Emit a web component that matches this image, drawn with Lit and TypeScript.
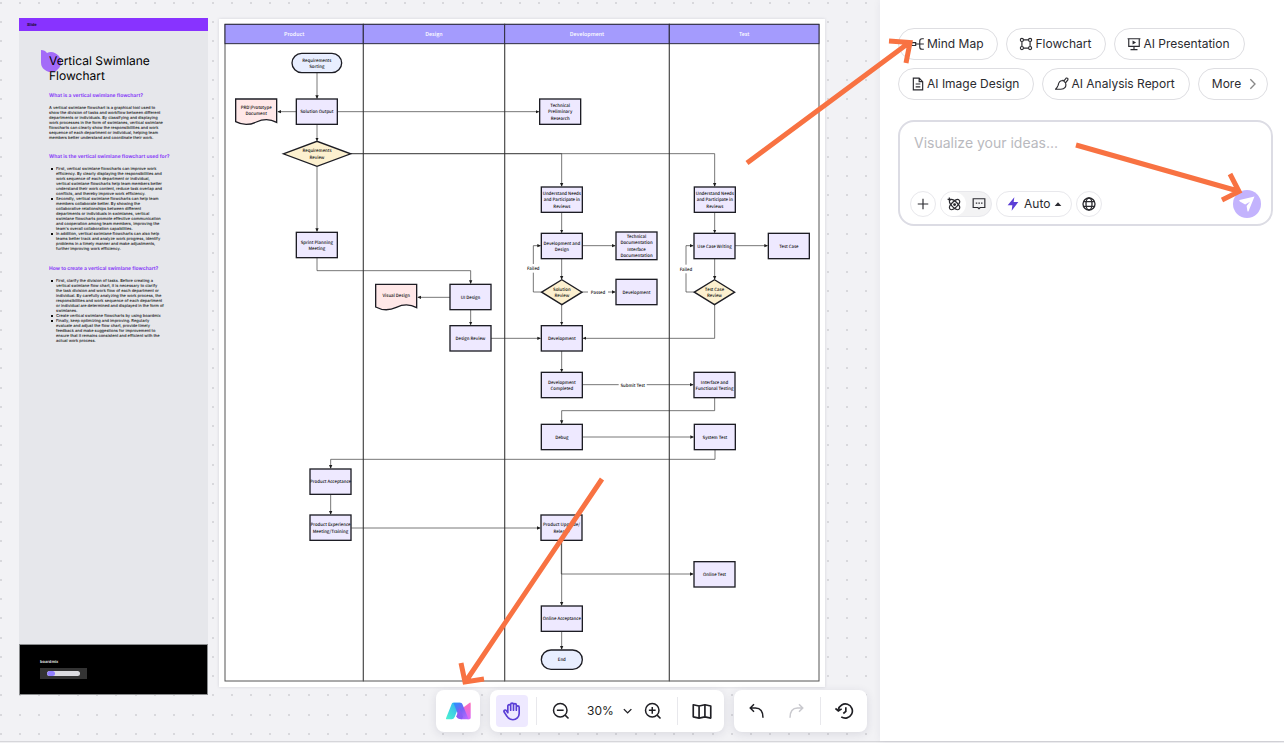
import { LitElement, html, svg, css } from "lit";
import { customElement } from "lit/decorators.js";

type Shape = "box" | "pill" | "diamond" | "doc";
interface Node {
  shape: Shape;
  x: number;
  y: number;
  w: number;
  h: number;
  lines: string[];
}

const box = (x: number, y: number, lines: string[], h = 76, w = 123): Node => ({ shape: "box", x, y, w, h, lines });

const NODES: Node[] = [
  { shape: "pill", x: 876, y: 160, w: 149, h: 58, lines: ["Requirements", "Sorting"] },
  { shape: "doc", x: 707, y: 297, w: 123, h: 76, lines: ["PRD\\Prototype", "Document"] },
  box(889, 297, ["Solution Output"]),
  { shape: "diamond", x: 850, y: 424, w: 202, h: 75, lines: ["Requirements", "Review"] },
  box(1619, 297, ["Technical", "Preliminary", "Research"]),
  box(1624, 561, ["Understand Needs", "and Participate in", "Reviews"]),
  box(2083, 561, ["Understand Needs", "and Participate in", "Reviews"]),
  box(889, 697, ["Sprint Planning", "Meeting"]),
  box(1624, 700, ["Development and", "Design"]),
  box(1848, 696, ["Technical", "Documentation", "Interface", "Documentation"], 83),
  box(2082, 700, ["Use Case Writing"]),
  box(2305, 700, ["Test Case"]),
  { shape: "diamond", x: 1625, y: 839, w: 121, h: 75, lines: ["Solution", "Review"] },
  box(1848, 838, ["Development"]),
  { shape: "diamond", x: 2083, y: 839, w: 121, h: 75, lines: ["Test Case", "Review"] },
  { shape: "doc", x: 1127, y: 853, w: 123, h: 76, lines: ["Visual Design"] },
  box(1350, 853, ["UI Design"]),
  box(1350, 977, ["Design Review"]),
  box(1624, 977, ["Development"]),
  box(1624, 1117, ["Development", "Completed"]),
  box(2082, 1117, ["Interface and", "Functional Testing"]),
  box(1624, 1273, ["Debug"]),
  box(2083, 1273, ["System Test"]),
  box(930, 1407, ["Product Acceptance"]),
  box(930, 1545, ["Product Experience", "Meeting/Training"]),
  box(1623, 1545, ["Product Upgrade/", "Release"]),
  box(2082, 1685, ["Online Test"]),
  box(1624, 1818, ["Online Acceptance"]),
  { shape: "pill", x: 1624, y: 1950, w: 123, h: 58, lines: ["End"] },
];

const LINKS: string[] = [
  "M951 218V295", "M951 373V422", "M951 500V694", "M889 335H834", "M1013 335H1616",
  "M1052 461H1685V558", "M1052 461H2144V558",
  "M1685 637V698", "M1685 776V837", "M1685 914V974", "M1685 1053V1115",
  "M2144 637V698", "M2144 776V837", "M1746 737H1845", "M2204 737H2302",
  "M1625 876H1600V737H1621", "M2082 876H2058V737H2079", "M1746 876H1845",
  "M2144 914V1015H1750", "M1473 1015H1621", "M1747 1154H2079",
  "M2144 1193V1232H1685V1270", "M1747 1311H2080", "M2145 1349V1378H992V1404",
  "M992 1483V1542", "M1054 1584H1620", "M1684 1621V1722H2079", "M1685 1621V1815",
  "M1685 1894V1947", "M951 773V812H1412V850", "M1350 892H1254", "M1412 929V974",
];

const LABELS = [
  { x: 1600, y: 805, w: 44, text: "Failed" },
  { x: 2058, y: 807, w: 44, text: "Failed" },
  { x: 1794, y: 876, w: 60, text: "Passed" },
  { x: 1898, y: 1155, w: 84, text: "Submit Test" },
];

const LANES = [
  { x: 675, w: 415, title: "Product" },
  { x: 1090, w: 424, title: "Design" },
  { x: 1514, w: 494, title: "Development" },
  { x: 2008, w: 449, title: "Test" },
];

@customElement("swimlane-diagram")
export class SwimlaneDiagram extends LitElement {
  static styles = css`
    :host { display: block; background: #fff; box-shadow: 0 0 3px rgba(30, 30, 50, 0.14); }
    svg { display: block; width: 100%; height: auto; }
    text { font-family: "Noto Sans CJK SC", "Noto Sans", sans-serif; font-size: 13px; font-weight: 500; fill: #111; text-anchor: middle; text-rendering: geometricPrecision; }
    .title { font-size: 16px; fill: #fff; }
    .head { fill: #a49bfd; stroke: #2c2a3c; stroke-width: 3; }
    .lane { fill: none; stroke: #555; stroke-width: 3; }
    .link { fill: none; stroke: #333; stroke-width: 2; }
    .tip { fill: #1d1d1d; }
    .gap { fill: #fff; }
    .shape { stroke: #1d1d24; stroke-width: 4; }
    .box { fill: #eee9ff; }
    .pill { fill: #e8eeff; }
    .diamond { fill: #fcf0cf; }
    .doc { fill: #ffe8e8; }
  `;

  private outline(n: Node) {
    const { x, y, w, h } = n;
    const cls = `shape ${n.shape}`;
    if (n.shape === "box") return svg`<rect class=${cls} x=${x} y=${y} width=${w} height=${h}></rect>`;
    if (n.shape === "pill") return svg`<rect class=${cls} x=${x} y=${y} width=${w} height=${h} rx="29"></rect>`;
    if (n.shape === "diamond")
      return svg`<path class=${cls} d="M${x} ${y + h / 2}L${x + w / 2} ${y}L${x + w} ${y + h / 2}L${x + w / 2} ${y + h}Z"></path>`;
    return svg`<path class=${cls} d="M${x} ${y}H${x + w}V${y + 70}Q${x + 94} ${y + 54} ${x + 62} ${y + 69}T${x} ${y + 68}Z"></path>`;
  }

  private lines(n: Node) {
    const lift = n.shape === "doc" ? 5 : 0;
    const first = n.y + n.h / 2 - lift - ((n.lines.length - 1) * 19) / 2 + 5;
    return n.lines.map((t, i) => svg`<text x=${n.x + n.w / 2} y=${first + i * 19}>${t}</text>`);
  }

  render() {
    return html`<svg viewBox="657 57 1818 2004" role="img" aria-label="Vertical swimlane flowchart">
      <defs>
        <marker id="tip" markerUnits="userSpaceOnUse" markerWidth="12" markerHeight="12" refX="9" refY="6" orient="auto">
          <path class="tip" d="M0 1L11 6L0 11Z"></path>
        </marker>
      </defs>
      ${LANES.map((l) => svg`
        <rect class="lane" x=${l.x} y="73" width=${l.w} height="1970"></rect>
        <rect class="head" x=${l.x} y="73" width=${l.w} height="58"></rect>
        <text class="title" x=${l.x + l.w / 2} y="107">${l.title}</text>`)}
      ${LINKS.map((d) => svg`<path class="link" d=${d} marker-end="url(#tip)"></path>`)}
      ${LABELS.map((l) => svg`
        <rect class="gap" x=${l.x - l.w / 2} y=${l.y - 13} width=${l.w} height="26"></rect>
        <text x=${l.x} y=${l.y + 5}>${l.text}</text>`)}
      ${NODES.map((n) => svg`${this.outline(n)}${this.lines(n)}`)}
    </svg>`;
  }
}

@customElement("guide-document")
export class GuideDocument extends LitElement {
  static styles = css`
    :host { display: flex; flex-direction: column; background: #e6e7eb; color: #111; font: 5px/5px Inter, sans-serif; text-rendering: geometricPrecision; }
    .bar { height: 13px; padding-left: 8px; background: #8833ff; display: flex; align-items: center; font-size: 4px; font-weight: 700; color: #1b0c33; }
    .body { flex: 1; padding: 22px 20px 0 30px; white-space: nowrap; }
    .title { position: relative; margin: 0; font-size: 12px; line-height: 15px; font-weight: 400; color: #000; }
    .blob { position: absolute; left: -8px; top: -3px; width: 20px; height: 22px; }
    .name { position: relative; }
    .sub { margin: 10px 0 6px; font-size: 5px; line-height: 6px; font-weight: 700; color: #8b44f7; }
    .sub.low { margin: 14px 0 6px; }
    .sub.last { margin: 15px 0 6px; }
    p, ul { margin: 0; font-size: 4px; font-weight: 500; }
    ul { padding: 0; list-style: none; }
    li { padding-left: 7px; background: linear-gradient(#111, #111) 2px 2px / 2px 2px no-repeat; }
    .foot { height: 51px; box-sizing: border-box; background: #000; border: 1px solid #8a8c8e; padding: 13px 20px 0; color: #ddd; }
    .brand { font-weight: 700; font-size: 4px; line-height: 7px; }
    .progress { margin-top: 3px; width: 47px; height: 11px; box-sizing: border-box; padding: 3px 7px; background: #333; }
    .track { height: 5px; border-radius: 3px; background: #dcdce0; overflow: hidden; }
    .fill { width: 8px; height: 5px; border-radius: 3px; background: #9280ff; }
  `;

  render() {
    return html`
      <div class="bar">Slide</div>
      <div class="body">
        <h1 class="title">
          <svg class="blob" viewBox="0 0 20 22" aria-hidden="true"><path fill="#a36bf8" d="M0 0Q4 0 6 3A10 10 0 1 1 0 12Z"></path></svg>
          <span class="name">Vertical Swimlane<br />Flowchart</span>
        </h1>
        <h2 class="sub">What is a vertical swimlane flowchart?</h2>
        <p>
          A vertical swimlane flowchart is a graphical tool used to<br />show the division of tasks and workflow between different<br />departments
          or individuals. By classifying and displaying<br />work processes in the form of swimlanes, vertical swimlane<br />flowcharts
          can clearly show the responsibilities and work<br />sequence of each department or individual, helping team<br />members better
          understand and coordinate their work.
        </p>
        <h2 class="sub low">What is the vertical swimlane flowchart used for?</h2>
        <ul>
          <li>
            First, vertical swimlane flowcharts can improve work<br />efficiency. By clearly displaying the responsibilities and<br />work
            sequence of each department or individual,<br />vertical swimlane flowcharts help team members better<br />understand their work
            content, reduce task overlap and<br />conflicts, and thereby improve work efficiency.
          </li>
          <li>
            Secondly, vertical swimlane flowcharts can help team<br />members collaborate better. By showing the<br />collaborative
            relationships between different<br />departments or individuals in swimlanes, vertical<br />swimlane flowcharts promote
            effective communication<br />and cooperation among team members, improving the<br />team's overall collaboration capabilities.
          </li>
          <li>
            In addition, vertical swimlane flowcharts can also help<br />teams better track and analyze work progress, identify<br />problems
            in a timely manner and make adjustments,<br />further improving work efficiency.
          </li>
        </ul>
        <h2 class="sub last">How to create a vertical swimlane flowchart?</h2>
        <ul>
          <li>
            First, clarify the division of tasks. Before creating a<br />vertical swimlane flow chart, it is necessary to clarify<br />the
            task division and work flow of each department or<br />individual. By carefully analyzing the work process, the<br />responsibilities
            and work sequence of each department<br />or individual are determined and displayed in the form of<br />swimlanes.
          </li>
          <li>Create vertical swimlane flowcharts by using boardmix</li>
          <li>
            Finally, keep optimizing and improving. Regularly<br />evaluate and adjust the flow chart, provide timely<br />feedback and make
            suggestions for improvement to<br />ensure that it remains consistent and efficient with the<br />actual work process.
          </li>
        </ul>
      </div>
      <div class="foot">
        <div class="brand">boardmix</div>
        <div class="progress"><div class="track"><div class="fill"></div></div></div>
      </div>
    `;
  }
}

const icon = (size: number, body: unknown) =>
  html`<svg class="ico" width=${size} height=${size} viewBox="0 0 24 24" fill="none" stroke="currentColor" aria-hidden="true">${body}</svg>`;

@customElement("canvas-toolbar")
export class CanvasToolbar extends LitElement {
  static styles = css`
    :host { display: flex; gap: 10px; font: 12px/20px Inter, sans-serif; color: #1f1f24; }
    .group { display: flex; align-items: center; height: 42px; border-radius: 8px; background: #fff; box-shadow: 0 2px 10px rgba(40, 40, 70, 0.12); }
    .ai { padding: 0 6px; }
    .view { padding: 0 6px; }
    .history { padding: 0 6px 0 7px; }
    button { width: 32px; height: 32px; padding: 0; border: 0; border-radius: 4px; background: none; color: inherit; font: inherit; display: flex; align-items: center; justify-content: center; }
    .on { background: #eee9ff; color: #5b3fd6; }
    .level { width: 46px; gap: 8px; margin: 0 4px 0 10px; }
    .rule { width: 1px; height: 28px; background: #e8e8ec; margin: 0 8px; }
    .spread { margin-right: 7px; }
    .dim { color: #c9c9ce; }
    svg { display: block; stroke-width: 2; }
  `;

  render() {
    return html`
      <div class="group ai">
        <button aria-label="AI assistant">
          <svg width="26" height="20" viewBox="0 0 78 60" aria-hidden="true">
            <defs>
              <linearGradient id="a" x1="0" y1="1" x2="1" y2="0"><stop offset="0" stop-color="#4df5cf"></stop><stop offset="1" stop-color="#30a8fa"></stop></linearGradient>
              <linearGradient id="b" x1="0" y1="0" x2="1" y2="1"><stop offset="0" stop-color="#1f97ff"></stop><stop offset=".5" stop-color="#7a62f5"></stop><stop offset="1" stop-color="#c36bff"></stop></linearGradient>
              <linearGradient id="c" x1="0" y1="0" x2="0" y2="1"><stop offset="0" stop-color="#ff6cb5"></stop><stop offset="1" stop-color="#d76bfb"></stop></linearGradient>
            </defs>
            <path fill="url(#c)" d="M74 5Q77 3 77 8V50Q77 55 72 55H68L50 23Z"></path>
            <path fill="url(#a)" d="M24 5H46L29 48Q26 55 20 55H5Q2 55 3 52L20 9Q21 5 24 5Z"></path>
            <path fill="url(#b)" d="M25 5H46Q50 5 52 9L71 55H50Q45 55 43 50Z"></path>
            <path fill="#8c5cf5" d="M43 22L34 46Q36 55 50 55L54 47Z"></path>
          </svg>
        </button>
      </div>
      <div class="group view">
        <button class="on" aria-label="Hand">${icon(20, svg`<path stroke-linecap="round" stroke-linejoin="round" d="M7 14V6a1.700 1.700 0 0 1 3.400 0v5M10.400 11V4.200a1.700 1.700 0 0 1 3.400 0V11M13.800 11V4.800a1.700 1.700 0 0 1 3.400 0V11M17.200 11V7.500a1.700 1.700 0 0 1 3.400 0v7.500a7.500 7.500 0 0 1-7.500 7.500c-3.500 0-5.200-1-7-4L2.600 13.300c-1-2 1.200-3.300 2.600-1.800L7 14"></path>`)}</button>
        <span class="rule"></span>
        <button aria-label="Zoom out">${icon(18, svg`<circle cx="11" cy="11" r="9"></circle><path d="M6.500 11h9M17.500 17.500l4.500 4.500"></path>`)}</button>
        <button class="level" aria-label="Zoom level">30%${icon(12, svg`<path stroke-width="3" d="M4 8l8 8l8-8"></path>`)}</button>
        <button aria-label="Zoom in">${icon(18, svg`<circle cx="11" cy="11" r="9"></circle><path d="M6.500 11h9M11 6.500v9M17.500 17.500l4.500 4.500"></path>`)}</button>
        <span class="rule"></span>
        <button aria-label="Map">${icon(20, svg`<path stroke-linejoin="round" d="M1.500 4.500l7 1.500L15.500 4.500l7 1.500V20.500L15.500 19l-7 1.500L1.500 19ZM8.500 6V20.500M15.500 4.500V19"></path>`)}</button>
      </div>
      <div class="group history">
        <button class="spread" aria-label="Undo">${icon(18, svg`<path d="M8 3L3 8l5 5M3 8h7c7 0 10 4 10 13"></path>`)}</button>
        <button aria-label="Redo" class="dim">${icon(18, svg`<path d="M16 3l5 5l-5 5M21 8h-7c-7 0-10 4-10 13"></path>`)}</button>
        <span class="rule"></span>
        <button aria-label="History">${icon(20, svg`<path d="M4 10.500A8.500 8.500 0 1 1 7.500 19M0.500 9l3.500 3l4-2.500M13 7.500v5l-3 2.500"></path>`)}</button>
      </div>
    `;
  }
}

@customElement("prompt-panel")
export class PromptPanel extends LitElement {
  static styles = css`
    :host { display: block; padding: 28px 11px 0 18px; background: #fff; font: 12px/20px Inter, sans-serif; color: #2b2b30; box-shadow: 0 0 8px rgba(40, 40, 70, 0.06); }
    button { font: inherit; color: inherit; background: #fff; border: 1px solid #dedee2; padding: 0; display: flex; align-items: center; justify-content: center; }
    svg { display: block; stroke-width: 2; }
    .chips { display: flex; flex-wrap: wrap; gap: 8px; }
    .chip { height: 32px; border-radius: 16px; padding: 0 14px 0 12px; gap: 2px; }
    .more { padding: 0 6px 0 13px; gap: 4px; }
    .more svg { color: #888; }
    .composer { margin-top: 20px; height: 106px; box-sizing: border-box; border: 2px solid #dcdce4; border-radius: 16px; padding: 10px 10px 6px; display: flex; flex-direction: column; justify-content: space-between; }
    textarea { height: 24px; padding: 0 4px; border: 0; outline: 0; resize: none; font: 14px/22px Inter, sans-serif; color: #222; }
    textarea::placeholder { color: #b9b9be; }
    .tools { display: flex; align-items: center; gap: 4px; }
    .round { width: 26px; height: 26px; border-radius: 13px; border-color: #e8e8ec; }
    .modes { display: flex; box-sizing: border-box; width: 52px; height: 26px; border-radius: 13px; background: #f3f3f4; border: 1px solid #e8e8ec; }
    .modes button { width: 25px; height: 24px; border: 0; border-radius: 12px; background: none; }
    .modes .active { background: #fff; }
    .auto { height: 26px; border-radius: 13px; border-color: #e8e8ec; padding: 0 8px; gap: 3px; }
    .bolt { color: #5b3fd6; }
    .send { margin-left: auto; width: 28px; height: 28px; border: 0; border-radius: 14px; background: #c3b3fd; color: #fff; }
  `;

  render() {
    return html`
      <div class="chips">
        <button class="chip">${icon(14, svg`<path d="M1 9.500h7v5H1ZM8 12h8M22 3h-3q-4 0-4 4v10q0 4 4 4h3M15 12h7"></path>`)}Mind Map</button>
        <button class="chip">${icon(14, svg`<circle cx="5" cy="5" r="2.700"></circle><circle cx="19" cy="5" r="2.700"></circle><circle cx="5" cy="19" r="2.700"></circle><circle cx="19" cy="19" r="2.700"></circle><path d="M8 5h8M8 19h8M5 8v8M19 8v8"></path>`)}Flowchart</button>
        <button class="chip">${icon(14, svg`<path d="M1 3h22M3 3v13h18V3M12 16v5M6 21.500h12"></path><path fill="currentColor" stroke="none" d="M9.500 6v7l6-3.500Z"></path>`)}AI Presentation</button>
        <button class="chip">${icon(14, svg`<path d="M4 2h10l6 6v14H4ZM14 2v6h6M8 12h8M8 17h8"></path>`)}AI Image Design</button>
        <button class="chip">${icon(14, svg`<path d="M14 6C8 6 6 10 5.500 14Q4 18 1 21h9c7 0 10-5 8-11M13 5l6 6M15 7l4-5q4-1 3 3l-4 5"></path>`)}AI Analysis Report</button>
        <button class="chip more">More${icon(16, svg`<path d="M8 5l7 7l-7 7"></path>`)}</button>
      </div>
      <form class="composer">
        <textarea aria-label="Prompt" placeholder="Visualize your ideas..."></textarea>
        <div class="tools">
          <button type="button" class="round" aria-label="Add">${icon(14, svg`<path d="M12 3v18M3 12h18"></path>`)}</button>
          <div class="modes">
            <button type="button" class="active" aria-label="Creative mode">${icon(14, svg`<ellipse cx="13" cy="13" rx="11" ry="5" transform="rotate(45 13 13)"></ellipse><ellipse cx="13" cy="13" rx="11" ry="5" transform="rotate(-45 13 13)"></ellipse><circle cx="13" cy="13" r="1.500" fill="currentColor"></circle><path d="M4 1v6M1 4h6"></path>`)}</button>
            <button type="button" aria-label="Chat mode">${icon(14, svg`<path d="M2 3h20v15h-8l-2 2l-2-2H2ZM6.500 10.500h2.500M11 10.500h2.500M15.500 10.500h2.500"></path>`)}</button>
          </div>
          <button type="button" class="auto">
            <svg class="bolt" width="16" height="16" viewBox="0 0 24 24" aria-hidden="true"><path fill="currentColor" d="M14 2L4 14h7l-1 8L20 9h-7Z"></path></svg>
            Auto
            <svg width="10" height="10" viewBox="0 0 24 24" aria-hidden="true"><path fill="currentColor" d="M4 17L12 8l8 9Z"></path></svg>
          </button>
          <button type="button" class="round" aria-label="Web search">${icon(16, svg`<circle cx="12" cy="12" r="9"></circle><ellipse cx="12" cy="12" rx="4.500" ry="9"></ellipse><path d="M4.500 8.500h15M4.500 15.500h15"></path>`)}</button>
          <button type="button" class="send" aria-label="Send">
            <svg width="18" height="18" viewBox="0 0 24 24" aria-hidden="true"><path fill="#fff" d="M2 6.500L22 2L14 21.500Q13 23 12.500 21L11.500 14.500L16 9L9.500 12.500L2.500 8.500Q1 7 2 6.500Z"></path></svg>
          </button>
        </div>
      </form>
    `;
  }
}

/* Grid dots snapped to whole pixels at the board's 30% zoom. */
const PITCH = 19.23;
let dots = "";
for (let r = 0; r < 80; r++)
  for (let c = 0; c < 140; c++) dots += `M${Math.round(c * PITCH)} ${Math.round(2 + r * PITCH)}h2v2h-2z`;

@customElement("app-root")
export class AppRoot extends LitElement {
  static styles = css`
    :host { position: relative; display: flex; flex-direction: column; height: 100vh; overflow: hidden; background: #f0f0f2; }
    .main { flex: 1; min-height: 0; display: flex; }
    .board { position: relative; flex: 1; min-width: 0; overflow: hidden; background: #f2f2f5; }
    .grid { position: absolute; inset: 0; width: 100%; height: 100%; fill: #d8d8dc; }
    .frames { position: relative; display: flex; align-items: flex-start; gap: 11px; padding: 18px 0 0 19px; }
    .guide { flex: 0 0 189px; min-width: 0; min-height: 677px; }
    .flow { flex: 0 0 606px; margin-top: 1px; }
    .bar { position: absolute; right: 13px; bottom: 9px; }
    .panel { flex: 0 0 404px; box-sizing: border-box; position: relative; }
    .edge { height: 1px; border-top: 1px solid #d6d6da; }
    .arrows { position: absolute; left: 0; top: 0; pointer-events: none; fill: none; stroke: #f87242; stroke-width: 5; }
  `;

  render() {
    return html`
      <div class="main">
        <main class="board">
          <svg class="grid" aria-hidden="true"><path d=${dots}></path></svg>
          <div class="frames">
            <guide-document class="guide"></guide-document>
            <swimlane-diagram class="flow"></swimlane-diagram>
          </div>
          <canvas-toolbar class="bar"></canvas-toolbar>
        </main>
        <prompt-panel class="panel"></prompt-panel>
      </div>
      <div class="edge"></div>
      <svg class="arrows" width="1284" height="743" aria-hidden="true">
        <path d="M747 163L910 42M889 41L910 42.500L906 63"></path>
        <path d="M1076 145L1238 191M1230 174L1239 191.500L1222 200"></path>
        <path d="M602 479L466 681M461 663L465 682L484 679"></path>
      </svg>
    `;
  }
}
